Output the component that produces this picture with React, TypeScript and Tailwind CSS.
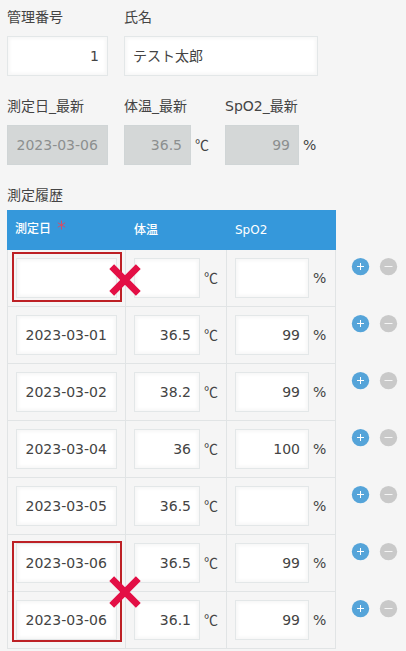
import clsx from "clsx"

interface Registro {
  data: string
  temperatura: string
  spo2: string
}

const registros: Registro[] = [
  { data: "", temperatura: "", spo2: "" },
  { data: "2023-03-01", temperatura: "36.5", spo2: "99" },
  { data: "2023-03-02", temperatura: "38.2", spo2: "99" },
  { data: "2023-03-04", temperatura: "36", spo2: "100" },
  { data: "2023-03-05", temperatura: "36.5", spo2: "" },
  { data: "2023-03-06", temperatura: "36.5", spo2: "99" },
  { data: "2023-03-06", temperatura: "36.1", spo2: "99" },
]

interface CaixaProps {
  valor: string
  className: string
  desabilitada?: boolean
}

function Caixa({ valor, className, desabilitada }: CaixaProps) {
  return (
    <div
      className={clsx(
        "flex h-10 shrink-0 items-center whitespace-nowrap border",
        desabilitada
          ? "border-[#d0d5d6] bg-[#d4d7d7] text-[#8c8f8f]"
          : "border-[#e3e7e8] bg-white shadow-[inset_2px_2px_3px_#f7f7f7,inset_-2px_-2px_3px_#f7f7f7]",
        className
      )}
    >
      {valor}
    </div>
  )
}

function Unidade({ children }: { children: string }) {
  return (
    <span
      className={clsx("ml-1", children === "℃" && "-mt-0.5 font-['Noto_Sans_CJK_JP',sans-serif]")}
    >
      {children}
    </span>
  )
}

function Rotulo({ children }: { children: string }) {
  return <div className="h-5 whitespace-nowrap leading-5">{children}</div>
}

function Cruz({ className }: { className: string }) {
  return (
    <svg className={clsx("absolute size-8", className)} viewBox="0 0 32 32">
      <path d="M2.7 2.7 29.3 29.3M29.3 2.7 2.7 29.3" stroke="#e30f45" strokeWidth="6.8" />
    </svg>
  )
}

function Botoes() {
  return (
    <div className="ml-[15px] mt-[7px] flex gap-[10px]">
      <svg className="size-[19px]" viewBox="0 0 19 19">
        <circle cx="9.5" cy="9.6" r="8.7" fill="#55a4d9" />
        <path d="M6 9.5h7M9.5 6v7" stroke="#fff" strokeWidth="1" />
      </svg>
      <svg className="-ml-px size-[19px]" viewBox="0 0 19 19">
        <circle cx="9.5" cy="9.6" r="8.7" fill="#c9c9c9" />
        <path d="M5.5 9.5h8" stroke="#f5f5f5" strokeWidth="1" />
      </svg>
    </div>
  )
}

function Linha({ registro }: { registro: Registro }) {
  return (
    <div className="flex h-[57px]">
      <div className="flex w-[329px] shrink-0 border-x border-b border-[#e1e4e5]">
        <div className="flex w-[118px] items-start border-r border-[#e1e4e5] pl-2 pt-2">
          <Caixa valor={registro.data} className="w-[101px] pl-[8.5px]" />
        </div>
        <div className="flex w-[101px] items-start border-r border-[#e1e4e5] pl-2 pt-2">
          <div className="flex items-center">
            <Caixa valor={registro.temperatura} className="w-[66px] justify-end pr-2" />
            <Unidade>℃</Unidade>
          </div>
        </div>
        <div className="flex items-start pl-2 pt-2">
          <div className="flex items-center">
            <Caixa valor={registro.spo2} className="w-[74px] justify-end pr-2" />
            <Unidade>%</Unidade>
          </div>
        </div>
      </div>
      <Botoes />
    </div>
  )
}

function App() {
  return (
    <main className="h-[651px] w-[406px] overflow-hidden bg-[#f5f5f5] pl-[7px] pt-[7px] font-['DejaVu_Sans','Noto_Sans_CJK_JP',sans-serif] text-[14px] font-normal leading-5 text-[#444]">
      <div className="flex gap-4">
        <div>
          <Rotulo>管理番号</Rotulo>
          <Caixa valor="1" className="mt-[9px] w-[101px] justify-end pr-2" />
        </div>
        <div>
          <Rotulo>氏名</Rotulo>
          <Caixa valor="テスト太郎" className="mt-[9px] w-[194px] pl-2" />
        </div>
      </div>

      <div className="mt-5 flex">
        <div className="w-[117px]">
          <Rotulo>測定日_最新</Rotulo>
          <Caixa desabilitada valor="2023-03-06" className="mt-[9px] w-[101px] pl-[8.5px]" />
        </div>
        <div className="w-[101px]">
          <Rotulo>体温_最新</Rotulo>
          <div className="mt-[9px] flex items-center">
            <Caixa desabilitada valor="36.5" className="w-[67px] justify-end pr-2" />
            <Unidade>℃</Unidade>
          </div>
        </div>
        <div>
          <Rotulo>SpO2_最新</Rotulo>
          <div className="mt-[9px] flex items-center">
            <Caixa desabilitada valor="99" className="w-[74px] justify-end pr-2" />
            <Unidade>%</Unidade>
          </div>
        </div>
      </div>

      <div className="mt-5">
        <Rotulo>測定履歴</Rotulo>
      </div>

      <section className="relative mt-[5px]">
        <header className="flex h-10 w-[329px] items-center bg-[#3598db] text-xs font-medium text-white">
          <div className="flex w-[127px] items-center pl-2">
            <span className="-mt-[2px]">測定日</span>
            <svg className="-mt-[10px] ml-[6px] size-[10px] shrink-0" viewBox="0 0 10 10">
              <path
                d="M4.5 .5v9M.8 2.8l7.4 4.4M8.2 2.8.8 7.2"
                stroke="#d0506a"
                strokeWidth="1"
              />
            </svg>
          </div>
          <div className="w-[101px]">体温</div>
          <div>SpO2</div>
        </header>

        {registros.map((registro, i) => (
          <Linha key={i} registro={registro} />
        ))}

        {/* marcações de data vazia e data duplicada */}
        <div className="absolute left-[5px] top-[42px] h-[50px] w-[110px] border-2 border-[#bd2025]" />
        <Cruz className="left-[102px] top-[53.5px]" />
        <div className="absolute left-[5px] top-[331px] h-[101px] w-[110px] border-2 border-[#bd2025]" />
        <Cruz className="left-[102px] top-[365.5px]" />
      </section>
    </main>
  )
}

export default App
